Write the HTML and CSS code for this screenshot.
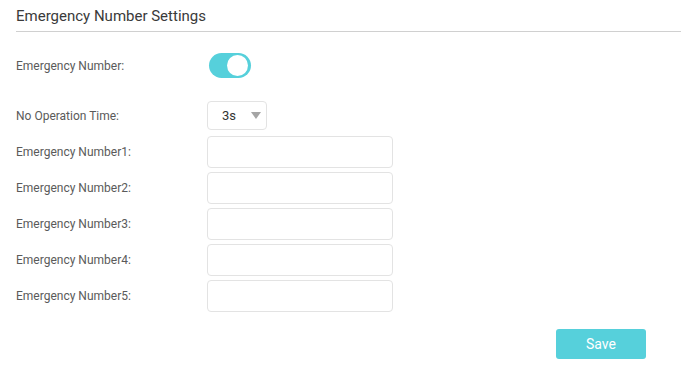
FILE: index.html
```html
<!DOCTYPE html>
<html lang="en">
<head>
    <meta charset="UTF-8">
    <title>Emergency Number Settings</title>
    <link rel="stylesheet" href="styles.css">
</head>
<body>
    <div class="panel">
        <div class="panel-header">Emergency Number Settings</div>

        <div class="form-row row-toggle">
            <label class="form-label">Emergency Number:</label>
            <div class="switch on"><span class="switch-knob"></span></div>
        </div>

        <div class="form-row row-select">
            <label class="form-label">No Operation Time:</label>
            <div class="select">
                <span class="select-value">3s</span>
                <span class="select-arrow"></span>
            </div>
        </div>

        <div class="form-row row-input first">
            <label class="form-label">Emergency Number1:</label>
            <input type="text" class="text-input">
        </div>
        <div class="form-row row-input">
            <label class="form-label">Emergency Number2:</label>
            <input type="text" class="text-input">
        </div>
        <div class="form-row row-input">
            <label class="form-label">Emergency Number3:</label>
            <input type="text" class="text-input">
        </div>
        <div class="form-row row-input">
            <label class="form-label">Emergency Number4:</label>
            <input type="text" class="text-input">
        </div>
        <div class="form-row row-input">
            <label class="form-label">Emergency Number5:</label>
            <input type="text" class="text-input">
        </div>

        <div class="actions">
            <button class="btn-save">Save</button>
        </div>
    </div>
</body>
</html>
```

FILE: styles.css
```css
body {
    margin: 0;
    background-color: #fff;
    font-family: 'Roboto', 'Liberation Sans', sans-serif;
    color: #555;
}
.panel {
    padding: 0 5px 0 16px;
}
.panel-header {
    height: 32px;
    line-height: 32px;
    font-size: 15px;
    color: #3a3a3a;
    border-bottom: 1px solid #d0d0d0;
    box-sizing: border-box;
}
.form-row {
    display: flex;
    align-items: center;
}
.form-label {
    width: 191px;
    font-size: 12px;
    color: #5a5a5a;
}
.row-toggle {
    margin-top: 21px;
    height: 25px;
}
.switch {
    width: 42px;
    height: 25px;
    margin-left: 2px;
    border-radius: 13px;
    background-color: #ccc;
    position: relative;
}
.switch.on {
    background-color: #56d0db;
}
.switch-knob {
    position: absolute;
    top: 2px;
    right: 3px;
    width: 21px;
    height: 21px;
    border-radius: 50%;
    background-color: #fff;
}
.row-select {
    margin-top: 23px;
    height: 29px;
}
.select {
    width: 60px;
    height: 29px;
    box-sizing: border-box;
    border: 1px solid #e3e3e3;
    border-radius: 4px;
    display: flex;
    align-items: center;
    padding-left: 14px;
}
.select-value {
    flex-grow: 1;
    font-size: 13px;
    color: #333;
}
.select-arrow {
    width: 0;
    height: 0;
    margin-right: 5px;
    border-left: 5px solid transparent;
    border-right: 5px solid transparent;
    border-top: 7px solid #a5a5a5;
}
.row-input {
    margin-top: 4px;
    height: 32px;
}
.row-input.first {
    margin-top: 6px;
}
.text-input {
    width: 186px;
    height: 32px;
    box-sizing: border-box;
    border: 1px solid #e3e3e3;
    border-radius: 4px;
    outline: none;
    padding: 0 8px;
    font-family: inherit;
    font-size: 13px;
}
.actions {
    display: flex;
    justify-content: flex-end;
    margin-top: 17px;
    padding-right: 35px;
}
.btn-save {
    width: 90px;
    height: 30px;
    border: none;
    border-radius: 3px;
    background-color: #56d0db;
    color: #fff;
    font-family: inherit;
    font-size: 14px;
}
```
